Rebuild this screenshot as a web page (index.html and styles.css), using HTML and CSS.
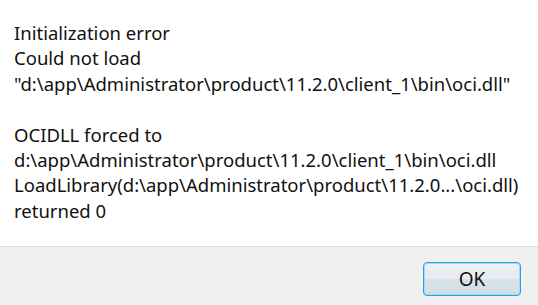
FILE: index.html
```html
<!DOCTYPE html>
<html>
<head>
<meta charset="utf-8">
<link rel="stylesheet" href="styles.css">
</head>
<body>
<div class="dialog">
  <div class="content">
    <div class="message">Initialization error<br>Could not load<br>"d:\app\Administrator\product\11.2.0\client_1\bin\oci.dll"<br><br>OCIDLL forced to<br>d:\app\Administrator\product\11.2.0\client_1\bin\oci.dll<br>LoadLibrary(d:\app\Administrator\product\11.2.0...\oci.dll)<br>returned 0</div>
  </div>
  <div class="footer">
    <button class="btn">OK</button>
  </div>
</div>
</body>
</html>
```

FILE: styles.css
```css
html, body {
  margin: 0;
  padding: 0;
  background: #ffffff;
}
.dialog {
  width: 538px;
  height: 305px;
  display: flex;
  flex-direction: column;
  font-family: "Noto Sans", "Open Sans", sans-serif;
  color: #111111;
}
.content {
  height: 247px;
  box-sizing: border-box;
  padding: 20px 0 0 14px;
  background: #ffffff;
  border-bottom: 1px solid #dfdfdf;
}
.message {
  font-size: 18.5px;
  line-height: 25.4px;
  white-space: nowrap;
}
.footer {
  flex: 1;
  background: #f0f0f0;
  display: flex;
  justify-content: flex-end;
  align-items: flex-start;
  padding: 15px 17px 0 0;
}
.btn {
  width: 98px;
  height: 34px;
  box-sizing: border-box;
  border: 1px solid #2fa0de;
  border-radius: 4px;
  background: linear-gradient(#f0f2f4 0%, #e6ebef 48%, #d9e2e9 52%, #d2dde6 100%);
  box-shadow: inset 0 0 0 1px #9fdaf6;
  font-family: "Noto Sans", "Open Sans", sans-serif;
  font-size: 19px;
  color: #111111;
  padding: 0;
}
```
